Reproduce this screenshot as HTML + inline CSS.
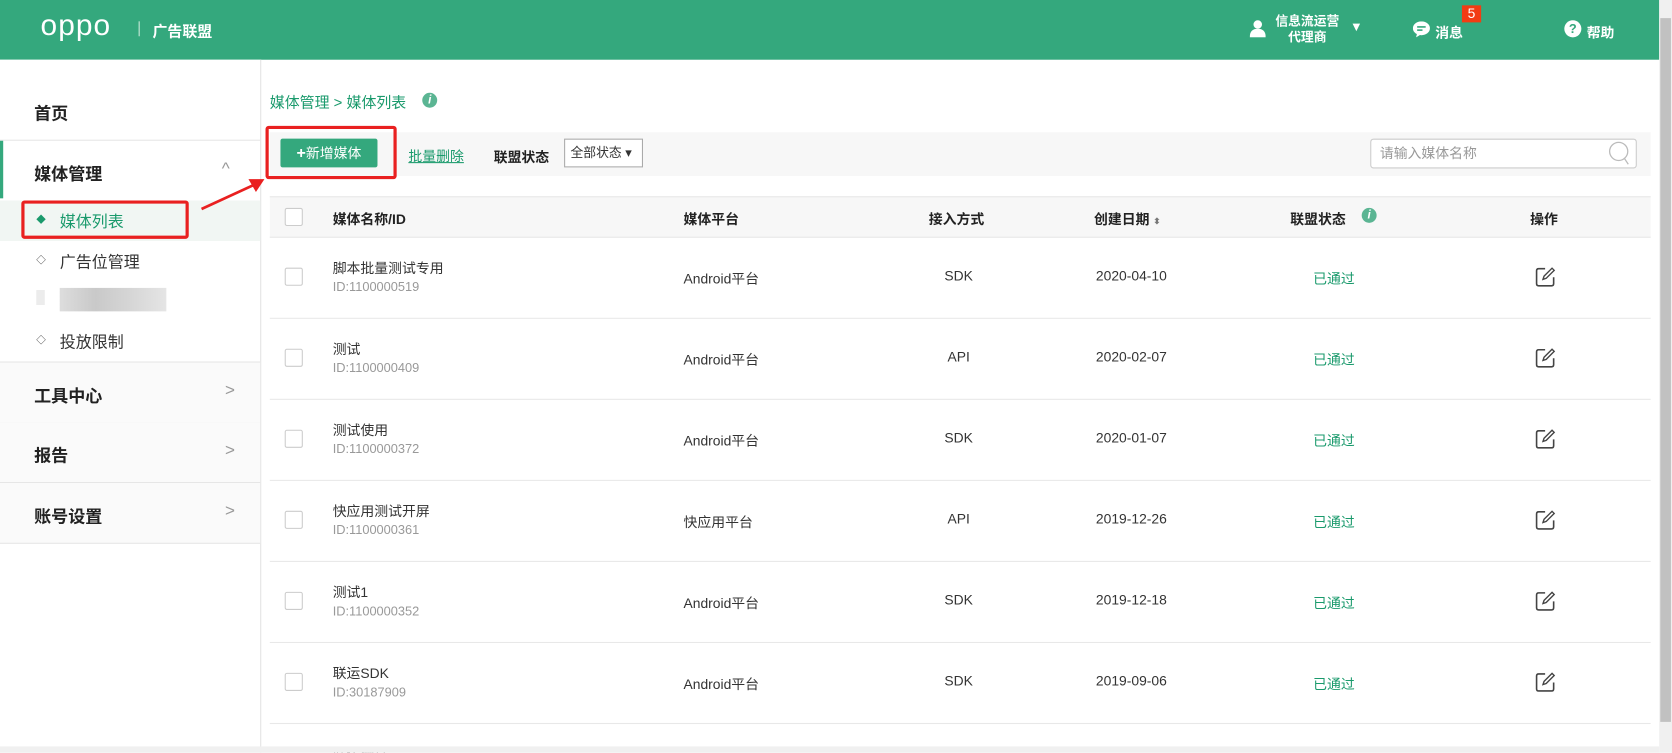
<!DOCTYPE html>
<html><head><meta charset="utf-8"><style>
html,body{margin:0;padding:0;width:1672px;height:752px;overflow:hidden;background:#fff}
#w{position:absolute;left:0;top:0;width:1568px;height:706px;overflow:hidden;transform:scale(1.06633);transform-origin:0 0;font-family:"Liberation Sans","Noto Sans CJK SC",sans-serif;color:#333;font-size:13px}
.a{position:absolute}
.hd{left:0;top:0;width:1556px;height:56px;background:#34a87d;color:#fff}
.sb{left:0;top:56px;width:244px;height:650px;border-right:1px solid #e3e3e3;background:#fff}
.mi{position:absolute;left:0;width:244px;border-bottom:1px solid #e6e6e6;font-size:16px;color:#222;font-weight:bold}
.mi .t{position:absolute;left:32px}
.mi .chev{position:absolute;left:211px;color:#999;font-size:16px;font-weight:normal}
.sub{position:absolute;left:0;width:244px;height:38px;font-size:15px;color:#333}
.sub i{position:absolute;left:34px;top:11px;font-style:normal;font-size:9px}
.sub span{position:absolute;left:56px;top:9px}
.row{position:absolute;left:253px;width:1295px;height:76px;border-bottom:1px solid #e8e8e8}
.cb{position:absolute;left:14px;width:15px;height:15px;border:1px solid #ccc;border-radius:2px;background:#fff}
.c{position:absolute;top:29px;font-size:13px;color:#333;text-align:center}
.ok{color:#1a9a6c}
</style></head><body><div id="w">
<div class="a hd">
 <div class="a" style="left:38px;top:8px;font-size:28px;letter-spacing:1px;font-family:'Liberation Sans',sans-serif">oppo</div>
 <div class="a" style="left:130px;top:20px;width:1px;height:14px;background:#cfeadd"></div>
 <div class="a" style="left:143px;top:19px;font-size:14px;font-weight:bold">广告联盟</div>
 <svg class="a" style="left:1172px;top:18px" width="15" height="17"><circle cx="7.5" cy="5" r="4" fill="#fff"/><path d="M0 17 Q0 9 7.5 9 Q15 9 15 17Z" fill="#fff"/></svg>
 <div class="a" style="left:1196px;top:13px;font-size:12px;line-height:15px;text-align:center;font-weight:bold">信息流运营<br>代理商</div>
 <div class="a" style="left:1266px;top:18px;font-size:12px">▼</div>
 <svg class="a" style="left:1325px;top:20px" width="16" height="15"><ellipse cx="8" cy="6.5" rx="8" ry="6.5" fill="#fff"/><path d="M4 11 L3 15 L8 12Z" fill="#fff"/><rect x="4" y="4.5" width="8" height="1.5" fill="#34a87d"/><rect x="4" y="7.5" width="5" height="1.5" fill="#34a87d"/></svg>
 <div class="a" style="left:1346px;top:20px;font-size:13px;font-weight:bold">消息</div>
 <div class="a" style="left:1371px;top:5px;width:18px;height:16px;background:#f23c13;color:#fff;font-size:13px;text-align:center;line-height:16px">5</div>
 <div class="a" style="left:1467px;top:19px;width:16px;height:16px;border-radius:50%;background:#fff;color:#34a87d;font-size:12px;font-weight:bold;text-align:center;line-height:16px">?</div>
 <div class="a" style="left:1488px;top:20px;font-size:13px;font-weight:bold">帮助</div>
</div>

<div class="a sb">
 <div class="mi" style="top:0;height:75px"><span class="t" style="top:37px">首页</span></div>
 <div class="mi" style="top:76px;height:54px;border:0"><div class="a" style="left:0;top:0;width:3px;height:54px;background:#34a87d"></div><span class="t" style="top:18px">媒体管理</span><span class="chev" style="left:208px;top:18px">^</span></div>
 <div class="sub" style="top:132px;background:#f1f6f3;color:#1a9a6c"><i style="color:#1a9a6c">◆</i><span>媒体列表</span></div>
 <div class="sub" style="top:170px"><i>◇</i><span>广告位管理</span></div>
 <div class="a" style="left:34px;top:216px;width:8px;height:14px;background:#ececec"></div>
 <div class="a" style="left:56px;top:214px;width:100px;height:22px;background:linear-gradient(90deg,#ddd,#c9c9c9,#d6d6d6,#e5e5e5)"></div>
 <div class="sub" style="top:245px"><i>◇</i><span>投放限制</span></div>
 <div class="mi" style="top:283px;height:56px;background:#fafafa;border-top:1px solid #e6e6e6"><span class="t" style="top:18px">工具中心</span><span class="chev" style="top:18px">&gt;</span></div>
 <div class="mi" style="top:340px;height:56px;background:#fafafa"><span class="t" style="top:18px">报告</span><span class="chev" style="top:18px">&gt;</span></div>
 <div class="mi" style="top:397px;height:56px;background:#fafafa"><span class="t" style="top:18px">账号设置</span><span class="chev" style="top:18px">&gt;</span></div>
</div>
<div class="a" style="border:3px solid #e92020;border-radius:3px;box-sizing:border-box;left:20px;top:188px;width:157px;height:36px"></div>

<div class="a" style="left:253px;top:86px;color:#1a9a6c;font-size:14px">媒体管理 &gt; 媒体列表</div>
<div class="a" style="left:396px;top:87px;width:14px;height:14px;border-radius:50%;background:#5bb593;color:#fff;font-size:11px;font-style:italic;text-align:center;line-height:14px;font-weight:bold">i</div>

<div class="a" style="left:253px;top:124px;width:1295px;height:41px;background:#f7f7f7"></div>
<div class="a" style="left:263px;top:130px;width:91px;height:27px;background:#34a87d;border-radius:2px;color:#fff;font-size:13px;line-height:27px;text-align:center"><b style="font-size:15px">+</b>新增媒体</div>
<div class="a" style="left:249px;top:118px;width:123px;height:50px;border:3px solid #e92020;border-radius:3px;box-sizing:border-box"></div>
<div class="a" style="left:383px;top:136px;color:#1a9a6c;text-decoration:underline">批量删除</div>
<div class="a" style="left:463px;top:137px;font-weight:bold;color:#222">联盟状态</div>
<div class="a" style="left:529px;top:130px;width:74px;height:27px;border:1px solid #aaa;box-sizing:border-box;background:#fff;font-size:12px;line-height:25px;padding-left:5px">全部状态 ▾</div>
<div class="a" style="left:1285px;top:130px;width:250px;height:28px;border:1px solid #ccc;border-radius:3px;box-sizing:border-box;background:#fff;color:#999;font-size:13px;line-height:26px;padding-left:8px">请输入媒体名称</div>
<svg class="a" style="left:1508px;top:132px" width="22" height="24"><circle cx="10" cy="10" r="8.5" fill="none" stroke="#bbb" stroke-width="1.2"/><path d="M15 16 L19 22" stroke="#bbb" stroke-width="1.2"/></svg>
<svg class="a" style="left:185px;top:164px" width="66" height="36"><path d="M4 32 L54 9" stroke="#e92020" stroke-width="2.5"/><path d="M48 4 L63 4 L55 16Z" fill="#e92020"/></svg>

<div class="a" style="left:253px;top:184px;width:1295px;height:37px;background:#f7f7f7;border-top:1px solid #e8e8e8;border-bottom:1px solid #e8e8e8;font-weight:bold;color:#222">
 <div class="cb" style="top:10px"></div>
 <div class="a" style="left:59px;top:10px">媒体名称/ID</div>
 <div class="a" style="left:388px;top:10px">媒体平台</div>
 <div class="a" style="left:618px;top:10px">接入方式</div>
 <div class="a" style="left:773px;top:10px">创建日期 <span style="font-size:8px;color:#777">⬍</span></div>
 <div class="a" style="left:957px;top:10px">联盟状态</div>
 <div class="a" style="left:1024px;top:10px;width:14px;height:14px;border-radius:50%;background:#5bb593;color:#fff;font-size:11px;font-style:italic;text-align:center;line-height:14px">i</div>
 <div class="a" style="left:1182px;top:10px">操作</div>
</div>

<div id="rows"></div>
<div class="a" style="left:1556px;top:0;width:12px;height:706px;background:#f0f0f0"><div class="a" style="left:1px;top:17px;width:10px;height:660px;background:#c1c1c1"></div></div>
<div class="a" style="left:0;top:700px;width:1556px;height:6px;background:#f0f0f0"></div>
<script>
var d=[["脚本批量测试专用","1100000519","Android平台","SDK","2020-04-10"],["测试","1100000409","Android平台","API","2020-02-07"],["测试使用","1100000372","Android平台","SDK","2020-01-07"],["快应用测试开屏","1100000361","快应用平台","API","2019-12-26"],["测试1","1100000352","Android平台","SDK","2019-12-18"],["联运SDK","30187909","Android平台","SDK","2019-09-06"],["联运测试","30187900","Android平台","SDK","2019-09-01"]];
var h="";d.forEach(function(r,i){var t=222+i*76;h+='<div class="row" style="top:'+t+'px"><div class="cb" style="top:29px"></div><div class="a" style="left:59px;top:19px;color:#333">'+r[0]+'</div><div class="a" style="left:59px;top:40px;color:#999;font-size:12px">ID:'+r[1]+'</div><div class="c" style="left:388px">'+r[2]+'</div><div class="c" style="left:596px;width:100px">'+r[3]+'</div><div class="c" style="left:758px;width:100px">'+r[4]+'</div><div class="c ok" style="left:948px;width:100px">已通过</div><svg class="a" style="left:1186px;top:28px" width="20" height="20"><path d="M10 2 H4 Q2 2 2 4 V16 Q2 18 4 18 H16 Q18 18 18 16 V10" fill="none" stroke="#444" stroke-width="1.5"/><path d="M8 12 L9 9 L16.5 1.5 L18.5 3.5 L11 11Z" fill="none" stroke="#444" stroke-width="1.3"/></svg></div>';});
document.getElementById("rows").innerHTML=h;
</script>
</div></body></html>
